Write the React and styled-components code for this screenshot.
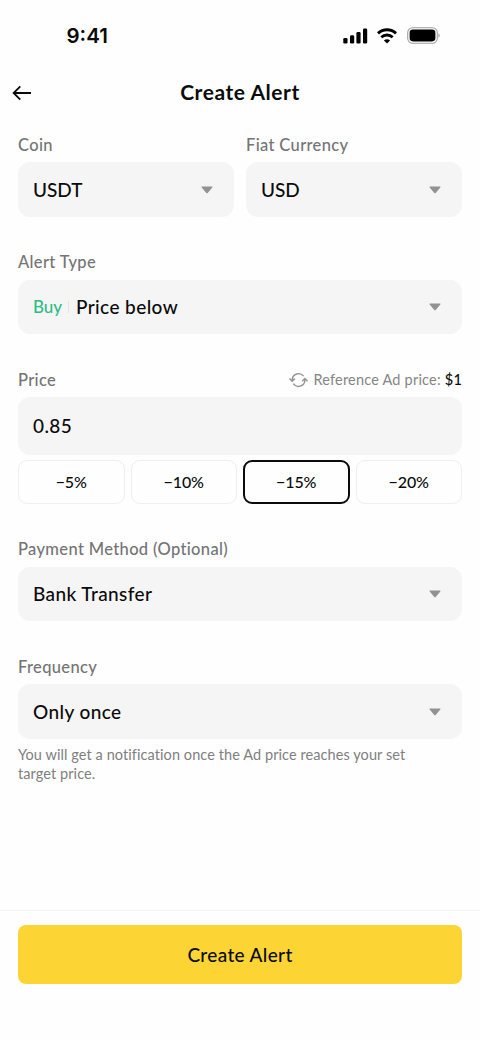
import React from 'react';
import styled, {createGlobalStyle, css} from 'styled-components';

const GlobalStyle = createGlobalStyle`
    * {
        box-sizing: border-box;
    }

    body {
        margin: 0;
        background: #fefefe;
    }

    button {
        padding: 0;
        border: 0;
        background: none;
        font: inherit;
        color: inherit;
    }
`;

const Screen = styled.div`
    display: flex;
    flex-direction: column;
    width: 480px;
    height: 1040px;
    overflow: hidden;
    background: #fefefe;
    color: #0b0b0b;
    font-family: Lato, 'Liberation Sans', sans-serif;
`;

const StatusBar = styled.div`
    display: flex;
    align-items: center;
    justify-content: space-between;
    height: 71px;
    padding: 0 40px 0 66.5px;
`;

const Clock = styled.span`
    font: 600 20.5px/24px Inter, sans-serif;
`;

const StatusIcons = styled.div`
    display: flex;
    align-items: center;
    gap: 9px;

    svg {
        display: block;
    }

    svg:nth-child(2) {
        margin-right: 1px;
    }
`;

const Header = styled.header`
    display: grid;
    grid-template-columns: 44px 1fr 44px;
    align-items: center;
    height: 44px;
`;

const BackButton = styled.button`
    display: flex;
    padding-left: 12px;
`;

const Title = styled.h1`
    margin: 0;
    padding-bottom: 2px;
    font-size: 21px;
    font-weight: 700;
    line-height: 26px;
    text-align: center;
    letter-spacing: .55px;
`;

const Form = styled.main`
    display: flex;
    flex-direction: column;
    gap: 35.5px;
    flex: 1;
    padding: 19.6px 18px 0;
`;

const Columns = styled.div`
    display: grid;
    grid-template-columns: 1fr 1fr;
    gap: 12px;
`;

const Field = styled.section`
    display: flex;
    flex-direction: column;
`;

const LabelRow = styled.div`
    display: flex;
    align-items: center;
    justify-content: space-between;
    height: 20px;
    margin-bottom: 7.5px;
`;

const Label = styled.span`
    padding-top: .5px;
    color: #747474;
    font-size: 16.5px;
    font-weight: 500;
    line-height: 20px;
    letter-spacing: .35px;
    white-space: nowrap;
`;

const Box = styled.div`
    display: flex;
    align-items: center;
    height: ${props => props.$height || 54.5}px;
    padding: .5px 21px 0 15px;
    border-radius: 12px;
    background: #f5f5f5;
`;

const Value = styled.span`
    flex: 1;
    font-size: 19px;
    font-weight: 500;
    line-height: 24px;
    letter-spacing: ${props => props.$spacing ?? .4}px;
`;

const Side = styled.span`
    width: 36px;
    margin-right: 7px;
    border-right: 1px solid #e3e3e3;
    color: #2ebd85;
    font-size: 17px;
    font-weight: 500;
    line-height: 12px;
`;

const Reference = styled.div`
    display: flex;
    align-items: center;
    color: #858585;
    font-size: 14.5px;
    line-height: 20px;
    letter-spacing: .2px;

    svg {
        margin-right: 5px;
    }

    b {
        margin-left: 4px;
        color: #0b0b0b;
        font-weight: 500;
    }
`;

const Presets = styled.div`
    display: grid;
    grid-template-columns: repeat(4, 1fr);
    gap: 6px;
    margin-top: 5px;
`;

const Preset = styled.button`
    height: 43.5px;
    padding-bottom: 1px;
    border: 1.5px solid #efefef;
    border-radius: 9px;
    font-size: 16px;
    font-weight: 500;
    letter-spacing: -.1px;

    ${props => props.$active && css`
        border: 2px solid #0b0b0b;
    `}
`;

const Hint = styled.p`
    margin: 6px 0 0;
    color: #808080;
    font-size: 14.5px;
    line-height: 19px;
    letter-spacing: .08px;
`;

const Footer = styled.footer`
    height: 130px;
    padding: 14px 18px 0;
    border-top: 1px solid #f5f5f5;
`;

const Submit = styled.button`
    width: 100%;
    height: 59px;
    border-radius: 8px;
    background: #fcd535;
    font-size: 19px;
    font-weight: 500;
    letter-spacing: .35px;
`;

const Signal = () => (
    <svg width="25" height="16" viewBox="0 0 25 16">
        <rect x="0.3" y="10" width="4.2" height="5.5" rx="1.3" />
        <rect x="7" y="7.2" width="4.2" height="8.3" rx="1.3" />
        <rect x="13.4" y="4" width="4.2" height="11.5" rx="1.3" />
        <rect x="20" y="0.5" width="4.2" height="15" rx="1.3" />
    </svg>
);

const Wifi = () => (
    <svg width="20" height="16" viewBox="0 0 20 16" fill="none" stroke="#000">
        <path d="M1 5.4a13 13 0 0 1 18 0" strokeWidth="2.9" />
        <path d="M4.3 9.3a8.2 8.2 0 0 1 11.4 0" strokeWidth="2.8" />
        <path d="M10 15.5 6.9 12.5a4.8 4.8 0 0 1 6.2 0Z" fill="#000" stroke="none" />
    </svg>
);

const Battery = () => (
    <svg width="33" height="17" viewBox="0 0 33 17">
        <rect x="0.7" y="0.7" width="29.6" height="15.6" rx="5" fill="none" stroke="#a0a0a0" strokeWidth="1.1" />
        <rect x="2.6" y="2.6" width="25.8" height="11.8" rx="3.3" />
        <path d="M31.5 6.3a2.7 2.7 0 0 1 0 4.5z" fill="#999" />
    </svg>
);

const BackArrow = () => (
    <svg width="20" height="16" viewBox="0 0 20 16" fill="none" stroke="#0b0b0b" strokeWidth="1.8">
        <path d="M19 8H2M8.3 1.3 1.6 8l6.7 6.7" />
    </svg>
);

const Caret = () => (
    <svg width="12" height="8" viewBox="0 0 12 8" fill="#929292">
        <path d="M1.1.5h9.8c.6 0 .8.7.4 1.1L6.7 6.9c-.4.5-1 .5-1.4 0L.7 1.6C.3 1.2.5.5 1.1.5Z" />
    </svg>
);

const Refresh = () => (
    <svg width="19" height="16" viewBox="0 0 19 16" fill="none" stroke="#929292" strokeWidth="1.4">
        <path d="M3.2 9V7.9A6.35 6.35 0 0 1 14.6 4.2M15.9 6.9v1.1A6.35 6.35 0 0 1 4.3 11.6" />
        <path d="M.5 6.6 3.2 9.2l2.7-2.6M13.2 9.2l2.7-2.6 2.6 2.6" />
    </svg>
);

const Select = ({label, value, side, spacing, children}) => (
    <Field>
        <LabelRow>
            <Label>{label}</Label>
        </LabelRow>
        <Box>
            {side && <Side>{side}</Side>}
            <Value $spacing={spacing}>{value}</Value>
            <Caret />
        </Box>
        {children}
    </Field>
);

const presets = ['−5%', '−10%', '−15%', '−20%'];

export default function App() {
    return (
        <Screen>
            <GlobalStyle />
            <StatusBar>
                <Clock>9:41</Clock>
                <StatusIcons>
                    <Signal />
                    <Wifi />
                    <Battery />
                </StatusIcons>
            </StatusBar>
            <Header>
                <BackButton aria-label="Back">
                    <BackArrow />
                </BackButton>
                <Title>Create Alert</Title>
            </Header>
            <Form>
                <Columns>
                    <Select label="Coin" value="USDT" spacing={0} />
                    <Select label="Fiat Currency" value="USD" spacing={0} />
                </Columns>
                <Select label="Alert Type" side="Buy" value="Price below" />
                <Field>
                    <LabelRow>
                        <Label>Price</Label>
                        <Reference>
                            <Refresh />
                            Reference Ad price: <b>$1</b>
                        </Reference>
                    </LabelRow>
                    <Box $height={58}>
                        <Value>0.85</Value>
                    </Box>
                    <Presets>
                        {presets.map(preset => (
                            <Preset key={preset} $active={preset === '−15%'}>{preset}</Preset>
                        ))}
                    </Presets>
                </Field>
                <Select label="Payment Method (Optional)" value="Bank Transfer" />
                <Select label="Frequency" value="Only once">
                    <Hint>
                        You will get a notification once the Ad price reaches your set
                        <br />
                        target price.
                    </Hint>
                </Select>
            </Form>
            <Footer>
                <Submit>Create Alert</Submit>
            </Footer>
        </Screen>
    );
}
